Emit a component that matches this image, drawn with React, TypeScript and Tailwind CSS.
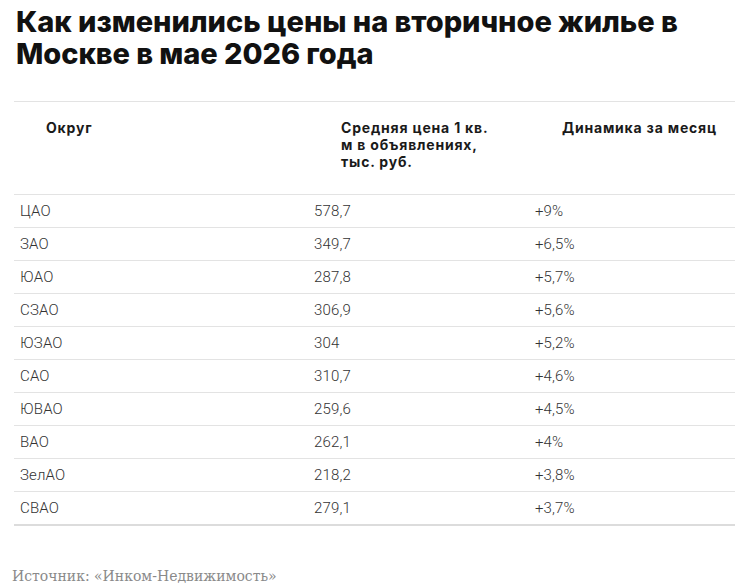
import React from "react";

const rows: [string, string, string][] = [
  ["ЦАО", "578,7", "+9%"],
  ["ЗАО", "349,7", "+6,5%"],
  ["ЮАО", "287,8", "+5,7%"],
  ["СЗАО", "306,9", "+5,6%"],
  ["ЮЗАО", "304", "+5,2%"],
  ["САО", "310,7", "+4,6%"],
  ["ЮВАО", "259,6", "+4,5%"],
  ["ВАО", "262,1", "+4%"],
  ["ЗелАО", "218,2", "+3,8%"],
  ["СВАО", "279,1", "+3,7%"],
];

export default function App() {
  return (
    <div className="w-[735px] h-[587px] bg-white overflow-hidden">
      <h1
        className="pl-[16px] pt-[6px] text-[29px] leading-[32px] font-extrabold text-[#111] tracking-[-0.05px]"
        style={{ fontFamily: "Inter, 'Noto Sans', sans-serif" }}
      >
        Как изменились цены на вторичное жилье в<br />Москве в мае 2026 года
      </h1>
      <div className="ml-[14px] mt-[31px] w-[760px]">
        <div
          className="flex h-[94px] border-t border-b border-[#e3e3e3] text-[14px] leading-[17px] font-bold tracking-[0.8px] text-[#1a1a1a]"
          style={{ fontFamily: "Inter, 'Noto Sans', sans-serif" }}
        >
          <div className="w-[294px] pl-[32px] pt-[17px]">Округ</div>
          <div className="w-[221px] pl-[33px] pt-[17px]">
            Средняя цена 1 кв.<br />м в объявлениях,<br />тыс. руб.
          </div>
          <div className="flex-1 pl-[33px] pt-[17px]">Динамика за месяц</div>
        </div>
        <div
          className="text-[15px] text-[#333] font-light tracking-[0.15px]"
          style={{ fontFamily: "Roboto, 'Liberation Sans', sans-serif" }}
        >
          {rows.map((r, i) => (
            <div
              key={r[0]}
              className={
                i === rows.length - 1
                  ? "flex h-[34px] items-center border-b-2 border-[#dcdcdc]"
                  : "flex h-[33px] items-center border-b border-[#e3e3e3]"
              }
            >
              <div className="w-[294px] pl-[6px]">{r[0]}</div>
              <div className="w-[221px] pl-[6px]">{r[1]}</div>
              <div className="flex-1 pl-[6px]">{r[2]}</div>
            </div>
          ))}
        </div>
      </div>
      <div
        className="pl-[12px] mt-[40px] text-[14px] text-[#8a8a8a]"
        style={{ fontFamily: "'DejaVu Serif', 'Liberation Serif', serif" }}
      >
        Источник: «Инком-Недвижимость»
      </div>
    </div>
  );
}
